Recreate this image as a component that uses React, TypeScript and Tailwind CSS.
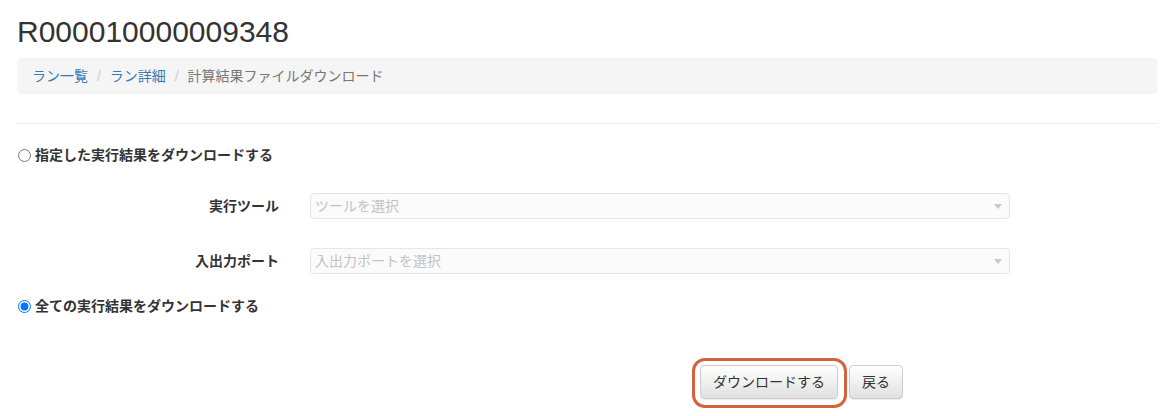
import React from "react";

export default function App() {
  return (
    <div
      className="w-[1172px] h-[416px] bg-white text-[#333] text-[14px] leading-[20px] overflow-hidden"
      style={{ fontFamily: '"Liberation Sans", "Noto Sans CJK JP", sans-serif' }}
    >
      <div className="pl-[17px] pr-[15px]">
        <h1 className="mt-[15px] mb-[10px] text-[30px] leading-[33px] font-normal text-[#333]">
          R000010000009348
        </h1>
        <div className="h-[36px] rounded-[4px] bg-[#f5f5f5] px-[15px] py-[8px] flex items-center whitespace-nowrap">
          <a className="text-[#337ab7]">ラン一覧</a>
          <span className="ml-[4px] px-[5px] text-[#ccc]">/{"\u00a0"}</span>
          <a className="text-[#337ab7]">ラン詳細</a>
          <span className="ml-[4px] px-[5px] text-[#ccc]">/{"\u00a0"}</span>
          <span className="text-[#777]">計算結果ファイルダウンロード</span>
        </div>
        <div className="mt-[29px] border-t border-[#eee]" />

        <label className="mt-[21px] h-[20px] flex items-center font-bold">
          <input type="radio" name="dl" className="m-0 ml-[1px] w-[13px] h-[13px]" />
          <span className="ml-[4px]">指定した実行結果をダウンロードする</span>
        </label>

        <div className="mt-[28px] flex items-center h-[26px]">
          <div className="w-[262px] text-right font-bold">実行ツール</div>
          <div className="ml-[31px] w-[700px] h-[26px] rounded-[4px] border border-[#e6e6e6] bg-[#fbfbfb] flex items-center justify-between pl-[4px] pr-[7px]">
            <span className="text-[#c2c2c2]">ツールを選択</span>
            <svg width="8" height="5" viewBox="0 0 8 5">
              <path d="M0 0 L8 0 L4 5 Z" fill="#c8c8c8" />
            </svg>
          </div>
        </div>

        <div className="mt-[29px] flex items-center h-[26px]">
          <div className="w-[262px] text-right font-bold">入出力ポート</div>
          <div className="ml-[31px] w-[700px] h-[26px] rounded-[4px] border border-[#e6e6e6] bg-[#fbfbfb] flex items-center justify-between pl-[4px] pr-[7px]">
            <span className="text-[#c2c2c2]">入出力ポートを選択</span>
            <svg width="8" height="5" viewBox="0 0 8 5">
              <path d="M0 0 L8 0 L4 5 Z" fill="#c8c8c8" />
            </svg>
          </div>
        </div>

        <label className="mt-[22px] h-[20px] flex items-center font-bold">
          <input type="radio" name="dl" defaultChecked className="m-0 ml-[1px] w-[13px] h-[13px]" />
          <span className="ml-[4px]">全ての実行結果をダウンロードする</span>
        </label>

        <div className="mt-[49px] ml-[683px] flex items-start">
          <div className="relative">
            <button
              className="h-[34px] px-[12px] rounded-[4px] border border-[#ccc] text-[#333] text-[14px] leading-[20px] bg-[linear-gradient(to_bottom,#fff_0%,#e0e0e0_100%)] shadow-[inset_0_1px_0_rgba(255,255,255,0.15),0_1px_1px_rgba(0,0,0,0.075)]"
            >
              ダウンロードする
            </button>
            <div className="pointer-events-none absolute left-[-8px] top-[-7px] right-[-9px] bottom-[-9px] rounded-[13px] border-[3px] border-[#d4623f]" />
          </div>
          <button className="ml-[11px] h-[34px] px-[12px] rounded-[4px] border border-[#ccc] text-[#333] text-[14px] leading-[20px] bg-[linear-gradient(to_bottom,#fff_0%,#e0e0e0_100%)] shadow-[inset_0_1px_0_rgba(255,255,255,0.15),0_1px_1px_rgba(0,0,0,0.075)]">
            戻る
          </button>
        </div>
      </div>
    </div>
  );
}
